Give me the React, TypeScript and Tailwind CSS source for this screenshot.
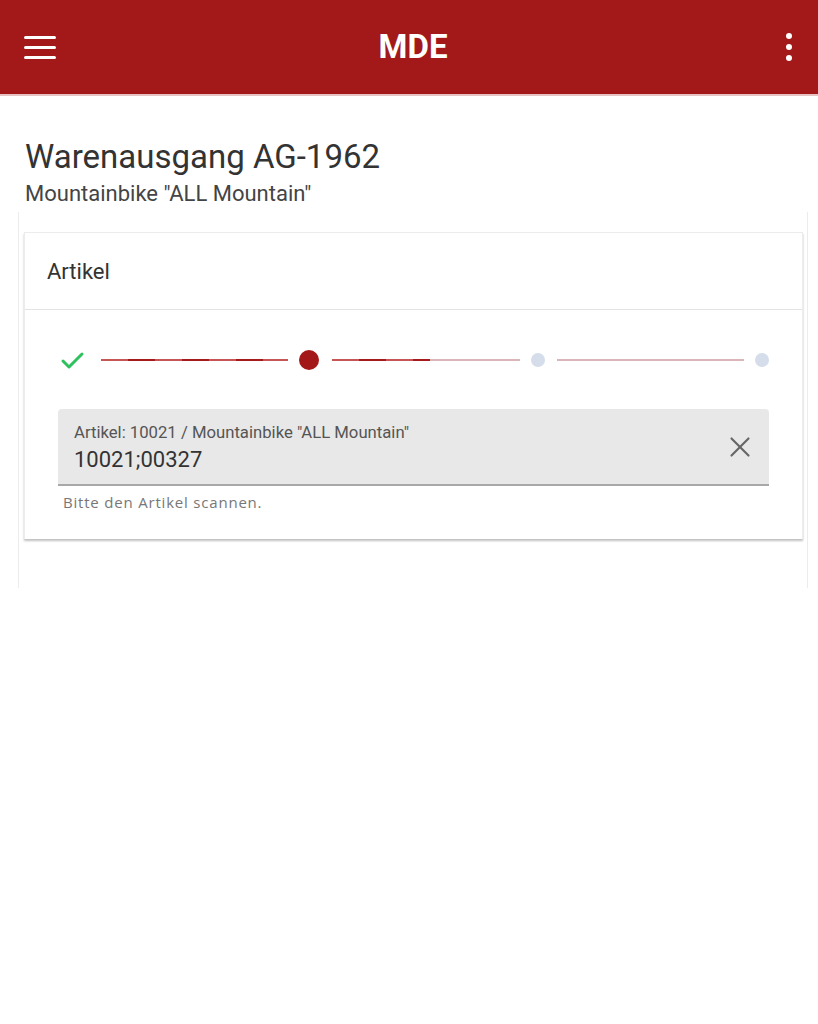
import { X } from 'lucide-react';

function Dot({ size, color }: { size: number; color: string }) {
  return (
    <div
      className="shrink-0 rounded-full"
      style={{ width: size, height: size, backgroundColor: color }}
    />
  );
}

export default function App() {
  const striped =
    'bg-[repeating-linear-gradient(90deg,#c65656_0px,#c65656_27px,#a81a1a_27px,#a81a1a_54px)]';

  return (
    <div className="min-h-[1024px] w-[818px] bg-white font-['Roboto',sans-serif] text-[#333]">
      {/* Top bar */}
      <header className="flex h-24 items-center justify-between border-b-2 border-[#e7c3c3] bg-[#a31818] pl-[24px] pr-[26px]">
        <div className="flex w-8 flex-col gap-[7px]">
          <span className="h-[3px] w-8 rounded-sm bg-white" />
          <span className="h-[3px] w-8 rounded-sm bg-white" />
          <span className="h-[3px] w-8 rounded-sm bg-white" />
        </div>
        <h1 className="pl-[10px] text-[33px] font-bold text-white">MDE</h1>
        <div className="flex w-8 flex-col items-end gap-[5px]">
          <span className="h-[6px] w-[6px] rounded-full bg-white" />
          <span className="h-[6px] w-[6px] rounded-full bg-white" />
          <span className="h-[6px] w-[6px] rounded-full bg-white" />
        </div>
      </header>

      {/* Title */}
      <div className="px-[25px] pt-[41px]">
        <h2 className="text-[33px] leading-[40px] text-[#333]">Warenausgang AG-1962</h2>
        <p className="mt-[4px] text-[22px] leading-[26px] text-[#444]">Mountainbike "ALL Mountain"</p>
      </div>

      {/* Outer frame */}
      <div className="ml-[18px] mr-[10px] mt-[5px] h-[376px] border-x border-[#ececec] pl-[5px] pr-[4px] pt-[20px]">
        <div className="border-x border-t border-[#ececec] bg-white shadow-[0_2px_2px_rgba(0,0,0,0.25)]">
          <div className="flex h-[77px] items-center border-b border-[#e3e3e3] px-[22px] text-[22px] text-[#333]">
            Artikel
          </div>

          <div className="px-[33px] pb-[27px] pt-[39px]">
            {/* Stepper */}
            <div className="flex h-[22px] items-center">
              <div className="flex w-[30px] shrink-0 justify-center">
                <svg width="26" height="20" viewBox="0 0 26 20" fill="none">
                  <path d="M3 11l6 6L22 4" stroke="#2fc15e" strokeWidth="3" strokeLinecap="round" strokeLinejoin="round" />
                </svg>
              </div>
              <div className={`ml-[13px] mr-[11px] h-[2px] flex-1 ${striped}`} />
              <Dot size={20} color="#a31818" />
              <div className="ml-[13px] mr-[11px] flex h-[2px] flex-1">
                <div className={`h-full w-[52%] ${striped}`} />
                <div className="h-full flex-1 bg-[#d9b5ba]" />
              </div>
              <Dot size={14} color="#d5ddeb" />
              <div className="ml-[12px] mr-[11px] h-[2px] flex-1 bg-[#d9b5ba]" />
              <Dot size={14} color="#d5ddeb" />
            </div>

            {/* Input */}
            <div className="mt-[38px] flex h-[77px] items-center rounded-t-[4px] border-b-2 border-[#a8a8a8] bg-[#e8e8e8] pl-[16px] pr-[12px]">
              <div className="flex-1 pt-[4px]">
                <div className="text-[16.7px] leading-[20px] text-[#555]">Artikel: 10021 / Mountainbike "ALL Mountain"</div>
                <div className="mt-[3px] text-[22px] leading-[28px] text-[#333]">10021;00327</div>
              </div>
              <X className="h-[34px] w-[34px] text-[#666]" strokeWidth={1.5} />
            </div>
            <p className="mt-[6px] pl-[5px] font-['Open_Sans',sans-serif] text-[15px] leading-[20px] tracking-[0.8px] text-[#777]">
              Bitte den Artikel scannen.
            </p>
          </div>
        </div>
      </div>
    </div>
  );
}
